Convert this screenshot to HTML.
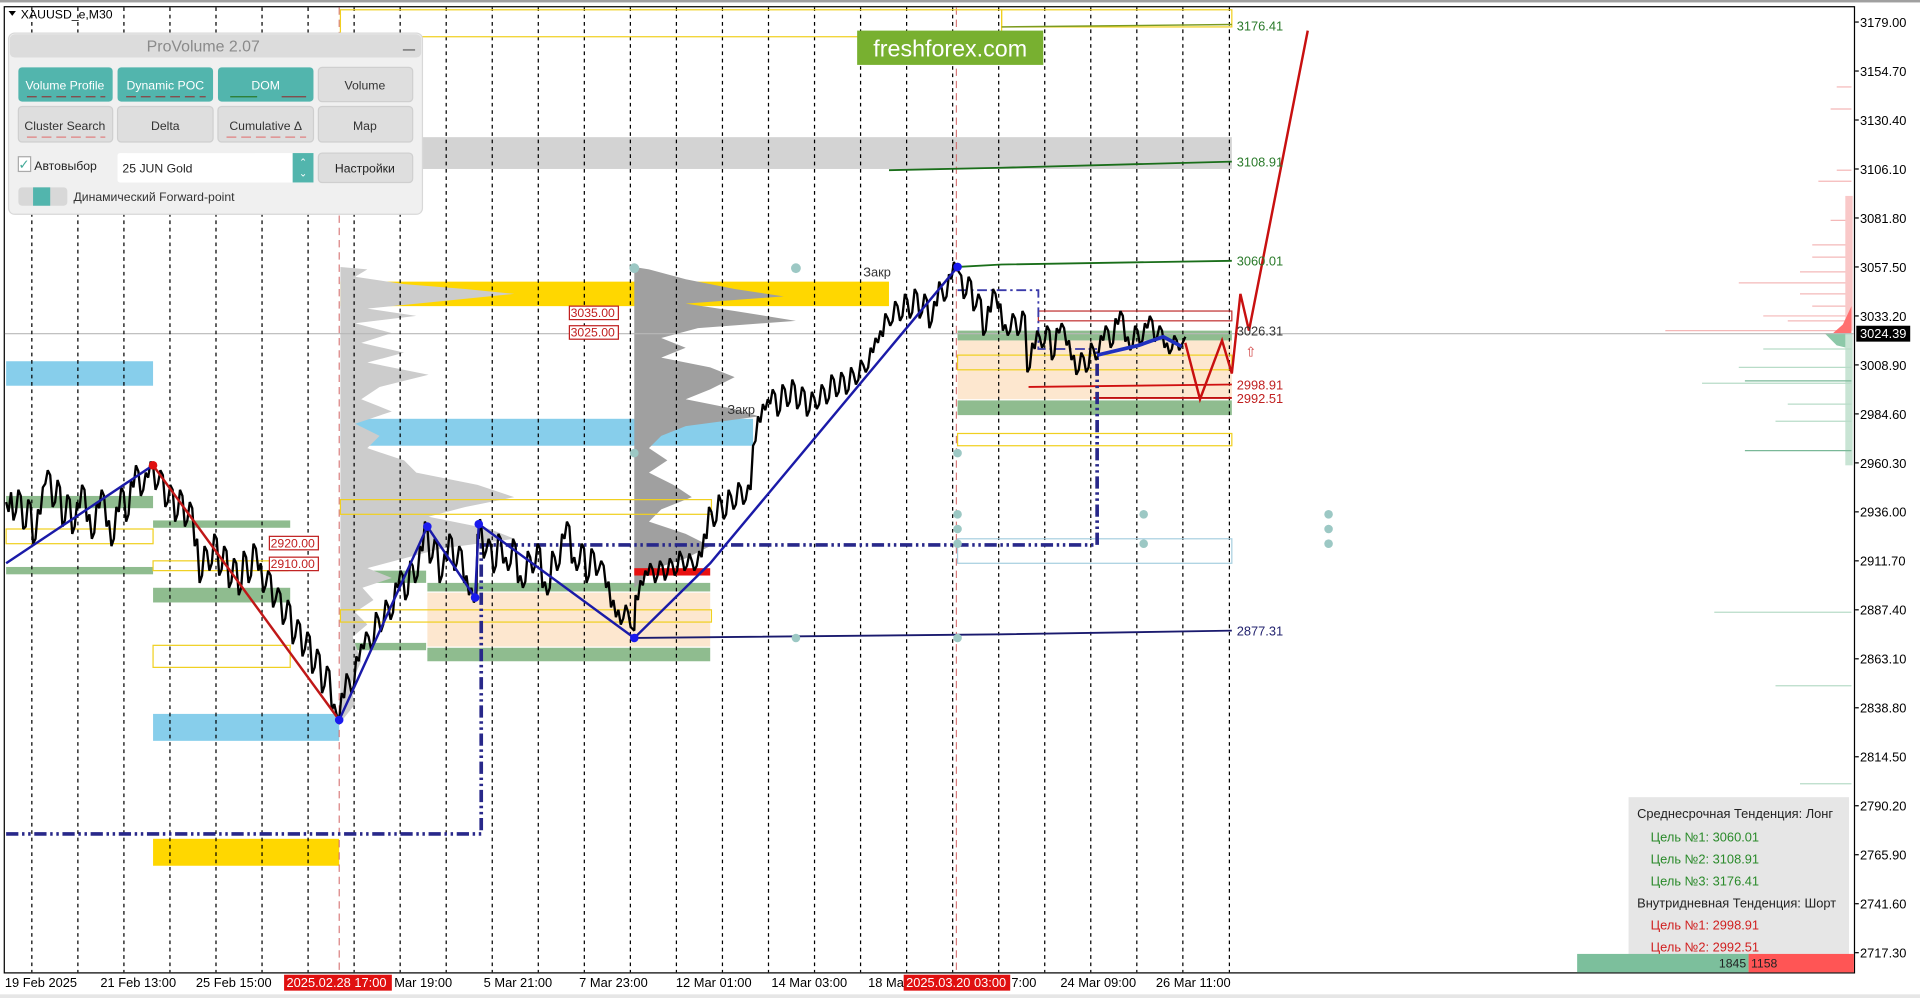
<!DOCTYPE html>
<html><head><meta charset="utf-8"><style>
html,body{margin:0;padding:0;background:#fff;overflow:hidden}
svg{display:block}
text{font-family:"Liberation Sans","DejaVu Sans",sans-serif}
</style></head><body>
<svg width="1920" height="998" viewBox="0 0 1568 815" preserveAspectRatio="none" xmlns="http://www.w3.org/2000/svg">
<rect x="0" y="0" width="1568" height="815" fill="#fff"/>
<rect x="0" y="0" width="1568" height="2" fill="#a0a0a0"/>
<rect x="0" y="812" width="1568" height="3" fill="#e6e6e6"/>
<rect x="3.5" y="5.5" width="1511" height="789" fill="none" stroke="#000" stroke-width="1"/>

<rect x="345" y="112" width="661" height="26" fill="#d3d3d3"/>
<rect x="278" y="230" width="448" height="20" fill="#ffd700"/>
<rect x="125" y="685" width="152" height="22" fill="#ffd700"/>
<rect x="5" y="295" width="120" height="20" fill="#87ceeb"/>
<rect x="278" y="342" width="337" height="22" fill="#87ceeb"/>
<rect x="125" y="583" width="152" height="22" fill="#87ceeb"/>
<rect x="782" y="278" width="224" height="48" fill="#fde7cf"/>
<rect x="349" y="484" width="231" height="44" fill="#fde7cf"/>
<g fill="#8fbc8f">
<rect x="782" y="270" width="224" height="8"/>
<rect x="782" y="327" width="224" height="12"/>
<rect x="349" y="476" width="231" height="7"/>
<rect x="349" y="529" width="231" height="11"/>
<rect x="5" y="405" width="120" height="10"/>
<rect x="5" y="463" width="120" height="6"/>
<rect x="125" y="480" width="112" height="12"/>
<rect x="125" y="425" width="112" height="6"/>
<rect x="278" y="466" width="70" height="10"/>
<rect x="280" y="525" width="68" height="6"/>
</g>

<polygon fill="#cccccc" points="278,218 300,220 290,226 330,232 380,236 420,240 360,246 300,252 340,258 290,264 320,272 295,280 330,288 300,296 350,306 310,316 295,326 320,336 290,346 310,356 300,366 330,376 340,386 390,396 420,406 380,414 350,422 400,432 420,440 360,448 330,456 300,464 320,472 296,480 305,490 290,500 300,510 288,520 295,540 286,560 290,575 278,590"/>
<polygon fill="#a0a0a0" points="518,218 530,220 560,228 600,236 640,242 560,248 600,254 650,262 570,268 540,276 560,284 540,292 580,300 600,308 580,318 560,326 600,334 620,340 560,348 540,356 530,366 545,376 530,386 550,396 565,406 540,416 530,426 560,436 580,446 560,456 530,466 522,476 518,480"/>

<g stroke-width="1">
<g stroke="#f4b8b8">
<line x1="1500" y1="71" x2="1512" y2="71"/><line x1="1495" y1="89" x2="1512" y2="89"/><line x1="1500" y1="139" x2="1512" y2="139"/><line x1="1485" y1="148" x2="1512" y2="148"/><line x1="1495" y1="180" x2="1512" y2="180"/><line x1="1480" y1="210" x2="1512" y2="210"/><line x1="1420" y1="231" x2="1512" y2="231"/><line x1="1480" y1="250" x2="1512" y2="250"/><line x1="1360" y1="270" x2="1512" y2="270"/><line x1="1460" y1="262" x2="1512" y2="262"/><line x1="1440" y1="258" x2="1512" y2="258"/><line x1="1470" y1="240" x2="1512" y2="240"/><line x1="1480" y1="200" x2="1512" y2="200"/><line x1="1470" y1="222" x2="1512" y2="222"/>
</g>
<rect x="1507" y="160" width="6" height="110" fill="#f9c8c8"/>
<polygon points="1497,272 1512,272 1512,250 1505,265" fill="#ff7070"/>
<polygon points="1490,272 1512,272 1512,285 1500,282" fill="#8cc8a8"/>
<rect x="1507" y="272" width="6" height="108" fill="#c8e4d4"/>
<g stroke="#b8dcc8">
<line x1="1440" y1="285" x2="1512" y2="285"/><line x1="1420" y1="300" x2="1512" y2="300"/><line x1="1390" y1="313" x2="1512" y2="313"/><line x1="1460" y1="330" x2="1512" y2="330"/><line x1="1450" y1="344" x2="1512" y2="344"/><line x1="1400" y1="500" x2="1512" y2="500"/><line x1="1450" y1="560" x2="1512" y2="560"/><line x1="1470" y1="640" x2="1512" y2="640"/>
</g>
<line x1="1425" y1="311" x2="1512" y2="311" stroke="#7ab898"/>
<line x1="1425" y1="368" x2="1512" y2="368" stroke="#7ab898"/>
</g>

<line x1="4" y1="272.5" x2="1514" y2="272.5" stroke="#b8b8b8"/>

<g stroke="#000" stroke-dasharray="3,3" stroke-width="1">
<line x1="26" y1="6" x2="26" y2="794"/><line x1="63.6" y1="6" x2="63.6" y2="794"/><line x1="101.2" y1="6" x2="101.2" y2="794"/><line x1="138.8" y1="6" x2="138.8" y2="794"/><line x1="176.4" y1="6" x2="176.4" y2="794"/><line x1="214" y1="6" x2="214" y2="794"/><line x1="251.6" y1="6" x2="251.6" y2="794"/><line x1="289.2" y1="6" x2="289.2" y2="794"/><line x1="326.8" y1="6" x2="326.8" y2="794"/><line x1="364.4" y1="6" x2="364.4" y2="794"/><line x1="402" y1="6" x2="402" y2="794"/><line x1="439.6" y1="6" x2="439.6" y2="794"/><line x1="477.2" y1="6" x2="477.2" y2="794"/><line x1="514.8" y1="6" x2="514.8" y2="794"/><line x1="552.4" y1="6" x2="552.4" y2="794"/><line x1="590" y1="6" x2="590" y2="794"/><line x1="627.6" y1="6" x2="627.6" y2="794"/><line x1="665.2" y1="6" x2="665.2" y2="794"/><line x1="702.8" y1="6" x2="702.8" y2="794"/><line x1="740.4" y1="6" x2="740.4" y2="794"/><line x1="778" y1="6" x2="778" y2="794"/><line x1="815.6" y1="6" x2="815.6" y2="794"/><line x1="853.2" y1="6" x2="853.2" y2="794"/><line x1="890.8" y1="6" x2="890.8" y2="794"/><line x1="928.4" y1="6" x2="928.4" y2="794"/><line x1="966" y1="6" x2="966" y2="794"/><line x1="1004" y1="6" x2="1004" y2="794"/>
</g>
<g stroke="#d06060" stroke-dasharray="6,4" stroke-width="0.8">
<line x1="277" y1="6" x2="277" y2="794"/><line x1="781" y1="6" x2="781" y2="794"/>
</g>

<g fill="none" stroke="#f0d020" stroke-width="1">
<rect x="278" y="8" width="540" height="22"/><rect x="818" y="8" width="188" height="14"/>
<rect x="5" y="432" width="120" height="12"/><rect x="125" y="458" width="110" height="8"/>
<rect x="125" y="527" width="112" height="18"/>
<rect x="278" y="408" width="303" height="12"/><rect x="278" y="498" width="303" height="10"/>
<rect x="782" y="354" width="224" height="10"/><rect x="782" y="290" width="224" height="12"/>
</g>
<g fill="none" stroke="#a8d0e0" stroke-width="1">
<rect x="782" y="440" width="224" height="20"/>
</g>
<g fill="none" stroke="#c03030" stroke-width="1">
<rect x="848" y="254" width="158" height="8"/>
</g>

<polyline points="818,22 1006,20" fill="none" stroke="#7a9a20" stroke-width="1.2"/>
<polyline points="726,139 818,137 1006,132" fill="none" stroke="#1a6e1a" stroke-width="1.5"/>
<polyline points="782,218 818,216 1006,213" fill="none" stroke="#1a6e1a" stroke-width="1.5"/>
<polyline points="518,521 818,518 1006,515" fill="none" stroke="#1a1a6e" stroke-width="1.5"/>
<polyline points="840,316 1006,314" fill="none" stroke="#d01010" stroke-width="1.5"/>
<polyline points="893,325 1006,325" fill="none" stroke="#c01010" stroke-width="1.5"/>
<rect x="518" y="464" width="62" height="6" fill="#e81010"/>

<g fill="none" stroke="#28288a" stroke-width="3" stroke-dasharray="10,3,2,3,2,3">
<polyline points="5,681 393,681 393,445 896,445 896,285"/>
</g>
<polyline points="782,237 848,237 848,285 896,285" fill="none" stroke="#3a3aaa" stroke-width="1.5" stroke-dasharray="8,3,2,3"/>

<polyline fill="none" stroke="#000" stroke-width="1.9" stroke-linejoin="bevel" points="5,410 7,418 9,402 11,425 13,418 15,400 17,405 19,432 21,430 23,408 25,412 27,444 29,440 31,416 33,420 35,398 37,395 39,384 41,388 43,414 45,410 47,392 49,398 51,430 53,425 55,404 57,408 59,436 61,430 63,410 65,415 67,396 69,400 71,426 73,420 75,440 77,435 79,410 81,415 83,400 85,405 87,430 89,425 91,446 93,440 95,414 97,418 99,398 101,402 103,426 105,420 107,392 109,398 111,380 113,385 115,405 117,400 119,386 121,390 123,377 125,380 127,400 129,395 131,384 133,388 135,414 137,410 139,396 141,400 143,426 145,420 147,400 149,405 151,430 153,425 155,410 157,415 159,446 161,440 163,476 165,470 167,446 169,450 171,466 173,460 175,436 177,440 179,470 181,465 183,446 185,450 187,480 189,475 191,456 193,460 195,486 197,480 199,450 201,455 203,476 205,470 207,444 209,448 211,466 213,460 215,484 217,478 219,466 221,470 223,496 225,490 227,480 229,485 231,510 233,505 235,490 237,495 239,526 241,520 243,506 245,510 247,536 249,530 251,516 253,520 255,550 257,545 259,530 261,535 263,566 265,560 267,544 269,548 271,580 273,575 275,584 277,588 279,566 281,570 283,550 285,555 287,566 289,560 291,536 293,540 295,526 297,530 299,516 301,520 303,530 305,525 307,500 309,505 311,516 313,510 315,490 317,495 319,506 321,500 323,476 325,480 327,466 329,470 331,490 333,485 335,458 337,462 339,476 341,470 343,446 345,450 347,426 349,430 351,460 353,455 355,440 357,445 359,476 361,470 363,452 365,458 367,436 369,440 371,466 373,460 375,446 377,450 379,476 381,470 383,486 385,480 387,492 389,488 390,436 391,440 392,424 393,428 395,456 397,450 399,440 401,445 403,468 405,462 407,436 409,440 411,460 413,455 415,466 417,460 419,440 421,445 423,476 425,470 427,480 429,475 431,450 433,455 435,468 437,462 439,444 441,448 443,480 445,475 447,486 449,480 451,450 453,455 455,466 457,460 459,436 461,440 463,426 465,430 467,460 469,455 471,466 473,460 475,444 477,448 479,476 481,470 483,448 485,452 487,470 489,465 491,458 493,462 495,480 497,475 499,496 501,490 503,504 505,498 507,510 509,505 511,494 513,500 515,512 518,515 519,486 521,490 523,474 525,478 527,466 529,470 531,460 533,465 535,476 537,470 539,458 541,462 543,474 545,468 547,456 549,460 551,470 553,466 555,450 557,455 559,466 561,462 563,452 565,458 567,466 569,462 571,450 573,455 575,436 577,440 579,414 581,418 583,430 585,425 587,404 589,410 591,424 593,420 595,400 597,405 599,416 601,412 603,394 605,398 607,412 609,408 611,396 613,400 615,364 617,360 619,340 621,345 623,330 625,335 627,326 629,330 631,318 633,322 635,340 637,335 639,314 641,318 643,332 645,328 647,310 649,315 651,334 653,330 655,316 657,320 659,340 661,335 663,320 665,325 667,334 669,330 671,314 673,318 675,330 677,325 679,306 681,310 683,324 685,320 687,304 689,308 691,322 693,318 695,300 697,305 699,314 701,310 703,294 705,298 707,304 709,300 711,284 713,288 715,276 717,280 719,270 721,275 723,256 725,260 727,266 729,262 731,246 733,250 735,262 737,258 739,240 741,245 743,260 745,255 747,236 749,240 751,260 753,255 755,240 757,245 759,268 761,262 763,246 765,250 767,230 769,235 771,246 773,242 775,224 777,228 779,214 781,218 783,222 785,225 787,244 789,240 791,226 793,230 795,254 797,250 799,240 801,245 803,274 805,270 807,250 809,255 811,236 813,240 815,252 817,248 819,270 821,265 823,274 825,270 827,256 829,260 831,274 833,270 835,254 837,258 839,304 841,300 843,280 845,285 847,270 849,275 851,284 853,280 855,266 857,270 859,294 861,290 863,268 865,272 867,264 869,268 871,282 873,278 875,294 877,290 879,306 881,302 883,288 885,292 887,304 889,300 891,280 893,285 895,294 897,290 899,274 901,278 903,266 905,270 907,284 909,280 911,260 913,265 915,254 917,258 919,279 921,275 923,286 925,282 927,266 929,270 931,282 933,278 935,264 937,268 939,258 941,262 943,279 945,275 947,266 949,270 951,284 953,280 955,289 957,285 959,274 961,278 963,286 965,282 968,275"/>
<polyline points="896,290 930,282 950,275 965,283" fill="none" stroke="#2030c0" stroke-width="3"/>

<polyline points="5,460 125,380" fill="none" stroke="#1a1aa8" stroke-width="2"/>
<polyline points="125,380 277,588" fill="none" stroke="#c01818" stroke-width="2"/>
<polyline points="277,588 349,430 388,488 391,428 518,521 580,460 782,218" fill="none" stroke="#1a1aa8" stroke-width="2"/>
<g fill="#1a1aee"><circle cx="277" cy="588" r="3.5"/><circle cx="349" cy="430" r="3.5"/><circle cx="388" cy="488" r="3.5"/><circle cx="391" cy="428" r="3.5"/><circle cx="518" cy="521" r="3.5"/><circle cx="782" cy="218" r="3.5"/></g>
<circle cx="125" cy="380" r="3.5" fill="#e01010"/>

<g fill="#9cc8c4"><circle cx="518" cy="219" r="4"/><circle cx="650" cy="219" r="4"/><circle cx="518" cy="370" r="3.5"/><circle cx="650" cy="521" r="3.5"/><circle cx="782" cy="521" r="3.5"/><circle cx="782" cy="370" r="3.5"/><circle cx="782" cy="420" r="3.5"/><circle cx="782" cy="432" r="3.5"/><circle cx="782" cy="444" r="3.5"/><circle cx="934" cy="420" r="3.5"/><circle cx="934" cy="444" r="3.5"/><circle cx="1085" cy="420" r="3.5"/><circle cx="1085" cy="432" r="3.5"/><circle cx="1085" cy="444" r="3.5"/></g>

<polyline points="968,280 980,326 998,278 1006,305 1013,240 1020,270 1068,25" fill="none" stroke="#c81010" stroke-width="2"/>
<text x="1017" y="291" font-size="11" fill="#d04040">⇧</text>

<g font-size="10.5">
<text x="1010" y="25" fill="#2a7a2a">3176.41</text>
<text x="1010" y="136" fill="#2a7a2a">3108.91</text>
<text x="1010" y="217" fill="#2a7a2a">3060.01</text>
<text x="1010" y="274" fill="#333">3026.31</text>
<text x="1010" y="318" fill="#c02020">2998.91</text>
<text x="1010" y="329" fill="#c02020">2992.51</text>
<text x="1010" y="519" fill="#22226e">2877.31</text>
<text x="705" y="226" fill="#333">Закр</text>
<text x="594" y="338" fill="#333">Закр</text>
</g>
<g font-size="10" fill="#c02020">
<rect x="465" y="250" width="40" height="11" fill="#fff" stroke="#c02020"/><text x="466" y="259">3035.00</text>
<rect x="465" y="266" width="40" height="11" fill="#fff" stroke="#c02020"/><text x="466" y="275">3025.00</text>
<rect x="220" y="438" width="40" height="11" fill="#fff" stroke="#c02020"/><text x="221" y="447">2920.00</text>
<rect x="220" y="455" width="40" height="11" fill="#fff" stroke="#c02020"/><text x="221" y="464">2910.00</text>
</g>

<rect x="700" y="25" width="152" height="28" fill="#78b030"/>
<text x="776" y="46" font-size="19" fill="#fff" text-anchor="middle">freshforex.com</text>

<polygon points="7,9 13,9 10,13" fill="#000"/>
<text x="17" y="15" font-size="10" fill="#000">XAUUSD_e,M30</text>

<rect x="7" y="27" width="338" height="148" rx="5" fill="#f0f0f0" stroke="#d8d8d8"/>
<rect x="8" y="28" width="336" height="19" rx="4" fill="#dcdcdc"/>
<text x="166" y="42" font-size="13" fill="#8a8a8a" text-anchor="middle">ProVolume 2.07</text>
<rect x="329" y="40" width="10" height="1.5" fill="#888"/>
<g font-size="10">
<rect x="15" y="55" width="77" height="28" rx="3" fill="#52b5ad"/><text x="53" y="73" fill="#fff" text-anchor="middle">Volume Profile</text>
<rect x="96" y="55" width="78" height="28" rx="3" fill="#52b5ad"/><text x="135" y="73" fill="#fff" text-anchor="middle">Dynamic POC</text>
<rect x="178" y="55" width="78" height="28" rx="3" fill="#52b5ad"/><text x="217" y="73" fill="#fff" text-anchor="middle">DOM</text>
<rect x="260" y="55" width="77" height="28" rx="3" fill="#dedede" stroke="#cfcfcf"/><text x="298" y="73" fill="#333" text-anchor="middle">Volume</text>
<rect x="15" y="87" width="77" height="29" rx="3" fill="#dedede" stroke="#cfcfcf"/><text x="53" y="106" fill="#333" text-anchor="middle">Cluster Search</text>
<rect x="96" y="87" width="78" height="29" rx="3" fill="#dedede" stroke="#cfcfcf"/><text x="135" y="106" fill="#333" text-anchor="middle">Delta</text>
<rect x="178" y="87" width="78" height="29" rx="3" fill="#dedede" stroke="#cfcfcf"/><text x="217" y="106" fill="#333" text-anchor="middle">Cumulative Δ</text>
<rect x="260" y="87" width="77" height="29" rx="3" fill="#dedede" stroke="#cfcfcf"/><text x="298" y="106" fill="#333" text-anchor="middle">Map</text>
<g stroke="#8a4040" stroke-width="1"><line x1="22" y1="79" x2="86" y2="79" stroke-dasharray="8,4"/><line x1="103" y1="79" x2="168" y2="79" stroke-dasharray="8,4"/><line x1="230" y1="79" x2="250" y2="79"/><line x1="22" y1="112" x2="86" y2="112" stroke="#e08080" stroke-dasharray="8,4"/><line x1="185" y1="112" x2="250" y2="112" stroke="#e08080" stroke-dasharray="8,4"/></g>
<line x1="188" y1="79" x2="210" y2="79" stroke="#2a7a2a"/>
<rect x="15" y="128" width="10" height="12" fill="#fff" stroke="#aaa"/><text x="15" y="138" fill="#4a9" font-size="11">✓</text>
<text x="28" y="139" fill="#222">Автовыбор</text>
<rect x="96" y="125" width="160" height="24" rx="2" fill="#fff"/><rect x="239" y="125" width="17" height="24" fill="#52b5ad"/>
<text x="100" y="141" fill="#222">25 JUN Gold</text>
<text x="247.5" y="135" fill="#fff" font-size="8" text-anchor="middle">⌃</text><text x="247.5" y="144" fill="#fff" font-size="8" text-anchor="middle">⌄</text>
<rect x="260" y="125" width="77" height="24" rx="3" fill="#dedede" stroke="#cfcfcf"/><text x="298" y="141" fill="#222" text-anchor="middle">Настройки</text>
<rect x="15" y="153" width="40" height="15" rx="3" fill="#d8d8d8"/><rect x="27" y="153" width="14" height="15" fill="#52b5ad"/>
<text x="60" y="164" fill="#333">Динамический Forward-point</text>
</g>

<rect x="1330" y="651" width="180" height="140" fill="#e6e6e6"/>
<g font-size="10.5">
<text x="1337" y="668" fill="#222">Среднесрочная Тенденция: Лонг</text>
<text x="1348" y="687" fill="#2a8a2a">Цель №1: 3060.01</text>
<text x="1348" y="705" fill="#2a8a2a">Цель №2: 3108.91</text>
<text x="1348" y="723" fill="#2a8a2a">Цель №3: 3176.41</text>
<text x="1337" y="741" fill="#222">Внутридневная Тенденция: Шорт</text>
<text x="1348" y="759" fill="#d02020">Цель №1: 2998.91</text>
<text x="1348" y="777" fill="#d02020">Цель №2: 2992.51</text>
</g>
<rect x="1288" y="779" width="140" height="15" fill="#7cbf9c"/>
<rect x="1428" y="779" width="86" height="15" fill="#ff5555"/>
<text x="1426" y="790" font-size="10" fill="#222" text-anchor="end">1845</text>
<text x="1430" y="790" font-size="10" fill="#222">1158</text>

<g font-size="10.5" fill="#000">
<text x="1519" y="22">3179.00</text><text x="1519" y="62">3154.70</text><text x="1519" y="102">3130.40</text><text x="1519" y="142">3106.10</text><text x="1519" y="182">3081.80</text><text x="1519" y="222">3057.50</text><text x="1519" y="262">3033.20</text><text x="1519" y="302">3008.90</text><text x="1519" y="342">2984.60</text><text x="1519" y="382">2960.30</text><text x="1519" y="422">2936.00</text><text x="1519" y="462">2911.70</text><text x="1519" y="502">2887.40</text><text x="1519" y="542">2863.10</text><text x="1519" y="582">2838.80</text><text x="1519" y="622">2814.50</text><text x="1519" y="662">2790.20</text><text x="1519" y="702">2765.90</text><text x="1519" y="742">2741.60</text><text x="1519" y="782">2717.30</text>
</g>
<g stroke="#000"><line x1="1515" y1="18" x2="1518" y2="18"/><line x1="1515" y1="58" x2="1518" y2="58"/><line x1="1515" y1="98" x2="1518" y2="98"/><line x1="1515" y1="138" x2="1518" y2="138"/><line x1="1515" y1="178" x2="1518" y2="178"/><line x1="1515" y1="218" x2="1518" y2="218"/><line x1="1515" y1="258" x2="1518" y2="258"/><line x1="1515" y1="298" x2="1518" y2="298"/><line x1="1515" y1="338" x2="1518" y2="338"/><line x1="1515" y1="378" x2="1518" y2="378"/><line x1="1515" y1="418" x2="1518" y2="418"/><line x1="1515" y1="458" x2="1518" y2="458"/><line x1="1515" y1="498" x2="1518" y2="498"/><line x1="1515" y1="538" x2="1518" y2="538"/><line x1="1515" y1="578" x2="1518" y2="578"/><line x1="1515" y1="618" x2="1518" y2="618"/><line x1="1515" y1="658" x2="1518" y2="658"/><line x1="1515" y1="698" x2="1518" y2="698"/><line x1="1515" y1="738" x2="1518" y2="738"/><line x1="1515" y1="778" x2="1518" y2="778"/></g>
<rect x="1516" y="266" width="44" height="13" fill="#000"/>
<text x="1519" y="276" font-size="10.5" fill="#fff">3024.39</text>

<g font-size="10.5" fill="#000">
<text x="4" y="806">19 Feb 2025</text><text x="82" y="806">21 Feb 13:00</text><text x="160" y="806">25 Feb 15:00</text>
<text x="322" y="806">Mar 19:00</text><text x="395" y="806">5 Mar 21:00</text><text x="473" y="806">7 Mar 23:00</text><text x="552" y="806">12 Mar 01:00</text><text x="630" y="806">14 Mar 03:00</text><text x="709" y="806">18 Ma</text><text x="826" y="806">7:00</text><text x="866" y="806">24 Mar 09:00</text><text x="944" y="806">26 Mar 11:00</text>
</g>
<rect x="232" y="796" width="88" height="13" fill="#e01010"/><text x="234" y="806" font-size="10.5" fill="#fff">2025.02.28 17:00</text>
<rect x="738" y="796" width="87" height="13" fill="#e01010"/><text x="740" y="806" font-size="10.5" fill="#fff">2025.03.20 03:00</text>
</svg>
</body></html>
